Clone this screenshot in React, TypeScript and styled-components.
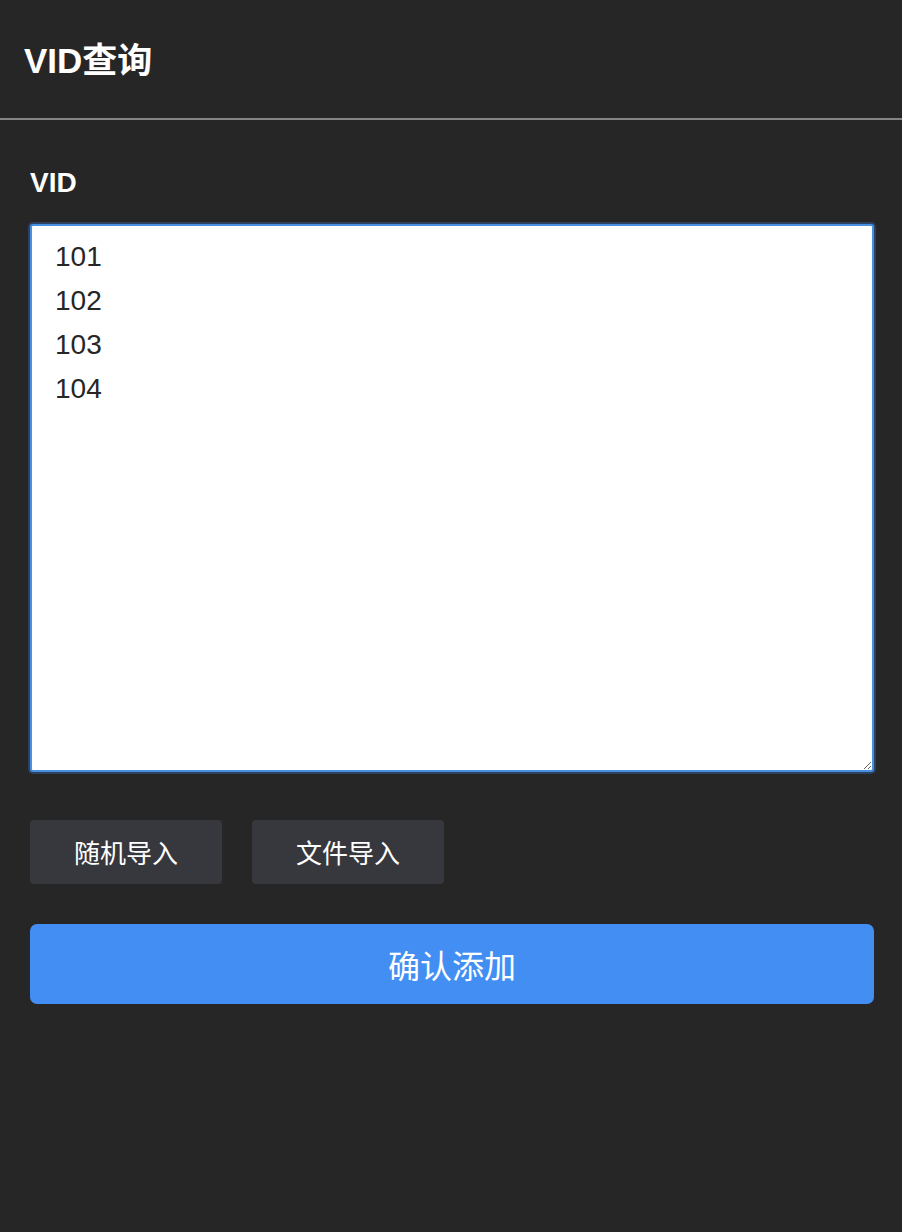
import React from "react";
import styled, { createGlobalStyle } from "styled-components";

const GlobalStyle = createGlobalStyle`
  html, body {
    margin: 0;
    padding: 0;
    background: #262626;
  }
  body {
    font-family: "Liberation Sans", "Noto Sans CJK SC", sans-serif;
    color: #ffffff;
  }
  * { box-sizing: border-box; }
`;

const Page = styled.div`
  min-height: 1232px;
  background: #262626;
`;

const Header = styled.header`
  height: 120px;
  display: flex;
  align-items: center;
  padding: 0 24px;
  border-bottom: 2px solid #858585;
`;

const Title = styled.h1`
  margin: 2px 0 0;
  font-size: 35px;
  font-weight: 700;
  color: #ffffff;
  line-height: 1;
`;

const Main = styled.main`
  padding: 46px 28px 0 30px;
  display: flex;
  flex-direction: column;
`;

const Label = styled.label`
  font-size: 28px;
  font-weight: 700;
  line-height: 1.2;
  color: #ffffff;
  margin-bottom: 24px;
`;

const TextArea = styled.textarea`
  display: block;
  width: 100%;
  height: 548px;
  border: 2px solid #4a90e2;
  border-radius: 3px;
  box-shadow: 0 0 0 2px #2b4260;
  background: #ffffff;
  color: #262626;
  font-family: "Liberation Sans", "Noto Sans CJK SC", sans-serif;
  font-size: 28px;
  line-height: 44px;
  padding: 9px 23px;
  outline: none;
  resize: both;
`;

const ButtonRow = styled.div`
  display: flex;
  gap: 30px;
  margin-top: 48px;
`;

const SecondaryButton = styled.button`
  width: 192px;
  height: 64px;
  border: none;
  border-radius: 4px;
  background: #37383e;
  color: #ffffff;
  font-family: "Liberation Sans", "Noto Sans CJK SC", sans-serif;
  font-size: 26px;
  padding: 0;
  cursor: pointer;
`;

const PrimaryButton = styled.button`
  margin-top: 40px;
  width: 100%;
  height: 80px;
  border: none;
  border-radius: 7px;
  background: #428ef3;
  color: #ffffff;
  font-family: "Liberation Sans", "Noto Sans CJK SC", sans-serif;
  font-size: 32px;
  padding: 0;
  cursor: pointer;
`;

export default function App() {
  return (
    <Page>
      <GlobalStyle />
      <Header>
        <Title>VID查询</Title>
      </Header>
      <Main>
        <Label htmlFor="vid">VID</Label>
        <TextArea id="vid" defaultValue={"101\n102\n103\n104"} />
        <ButtonRow>
          <SecondaryButton>随机导入</SecondaryButton>
          <SecondaryButton>文件导入</SecondaryButton>
        </ButtonRow>
        <PrimaryButton>确认添加</PrimaryButton>
      </Main>
    </Page>
  );
}
